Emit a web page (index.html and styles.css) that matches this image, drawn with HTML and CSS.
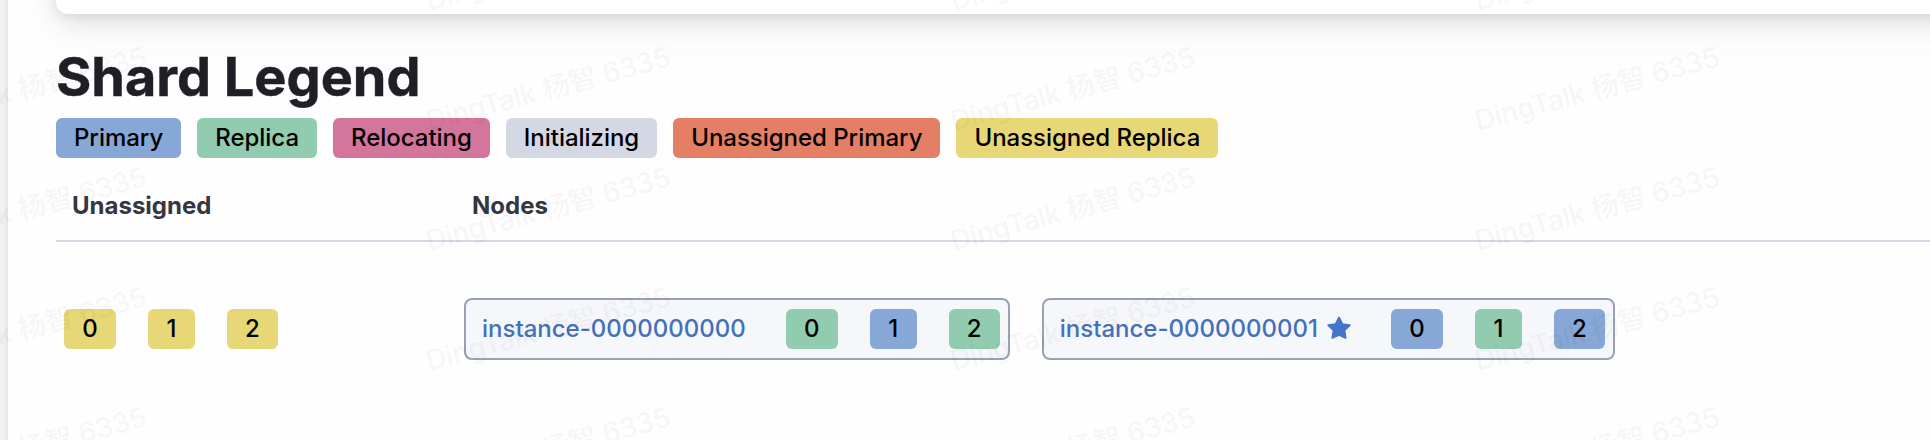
FILE: index.html
```html
<!DOCTYPE html>
<html lang="en">
<head>
<meta charset="utf-8">
<title>Shard Legend</title>
<link rel="stylesheet" href="styles.css">
</head>
<body>
<div class="app">
  <aside class="rail"></aside>
  <main class="page">
    <section class="panel"></section>
    <h2 class="title">Shard Legend</h2>
    <div class="legend">
      <span class="badge primary">Primary</span>
      <span class="badge replica">Replica</span>
      <span class="badge relocating">Relocating</span>
      <span class="badge initializing">Initializing</span>
      <span class="badge danger">Unassigned Primary</span>
      <span class="badge warning">Unassigned Replica</span>
    </div>
    <div class="table">
      <div class="row head">
        <div class="cell">Unassigned</div>
        <div class="cell">Nodes</div>
      </div>
      <div class="row body">
        <div class="shards unassigned">
          <span class="badge warning">0</span>
          <span class="badge warning">1</span>
          <span class="badge warning">2</span>
        </div>
        <div class="nodes">
          <div class="node">
            <a class="name">instance-0000000000</a>
            <div class="shards">
              <span class="badge replica">0</span>
              <span class="badge primary">1</span>
              <span class="badge replica">2</span>
            </div>
          </div>
          <div class="node">
            <a class="name">instance-0000000001</a>
            <svg class="star" viewBox="0 0 24 24"><path d="M12 1.6 15.3 8.2 22.6 9.2 17.3 14.4 18.6 21.8 12 18.9 5.4 21.8 6.7 14.4 1.4 9.2 8.7 8.2Z"/></svg>
            <div class="shards">
              <span class="badge primary">0</span>
              <span class="badge replica">1</span>
              <span class="badge primary">2</span>
            </div>
          </div>
        </div>
      </div>
    </div>
  </main>
  <svg class="watermark" width="1930" height="440">
    <defs>
      <g id="column">
        <text textLength="252" transform="translate(4 11) rotate(-15)">DingTalk 杨智 6335</text>
        <text textLength="252" transform="translate(4 131) rotate(-15)">DingTalk 杨智 6335</text>
        <text textLength="252" transform="translate(4 251) rotate(-15)">DingTalk 杨智 6335</text>
        <text textLength="252" transform="translate(4 371) rotate(-15)">DingTalk 杨智 6335</text>
        <text textLength="252" transform="translate(4 491) rotate(-15)">DingTalk 杨智 6335</text>
      </g>
    </defs>
    <use href="#column" x="-99"/>
    <use href="#column" x="425"/>
    <use href="#column" x="949.5"/>
    <use href="#column" x="1474"/>
  </svg>
</div>
</body>
</html>
```
FILE: styles.css
```css
* { box-sizing: border-box; }

body {
  margin: 0;
  background: #fefefe;
  font-family: Inter, "Noto Sans CJK SC", sans-serif;
  font-size: 24px;
  color: #343741;
}

.app {
  position: relative;
  display: flex;
  height: 440px;
  overflow: hidden;
}

.rail {
  width: 8px;
  background: linear-gradient(90deg, #f2f3f5 0, #eff0f2 50%, #e5e6e8 100%);
}

.page {
  flex: 1;
  min-width: 0;
  padding-left: 48px;
}

.panel {
  height: 214px;
  margin: -200px -80px 0 0;
  background: #fff;
  border-radius: 12px;
  box-shadow: 0 2px 12px rgba(0, 0, 0, .07), 0 8px 24px rgba(0, 0, 0, .09), 0 16px 44px rgba(0, 0, 0, .045);
}

.title {
  margin: 39px 0 0;
  height: 65px;
  font-size: 54px;
  line-height: 48px;
  font-weight: 700;
  letter-spacing: 0;
  color: #1f2025;
  white-space: nowrap;
  -webkit-text-stroke: .5px #1f2025;
}

.legend {
  display: flex;
  gap: 16px;
}

.badge {
  height: 40px;
  padding: 0 18px;
  border-radius: 6px;
  line-height: 39px;
  font-weight: 500;
  color: #000;
  white-space: nowrap;
}

.legend .badge { letter-spacing: -.03px; }

.primary { background: #87a7d6; }
.replica { background: #91cbb0; }
.relocating { background: #d4769b; }
.initializing { background: #d4d8e5; }
.danger { background: #e47e65; }
.warning { background: #e8d776; }

.row {
  display: grid;
  grid-template-columns: 400px 1fr;
}

.head {
  height: 84px;
  padding-top: 30px;
  border-bottom: 2px solid #d3d9e5;
  font-weight: 700;
  line-height: 36px;
}

.cell { padding-left: 16px; }

.body {
  padding: 56px 0 0 8px;
}

.shards {
  display: grid;
  grid-template-columns: 52px 47px 51px;
  column-gap: 32px;
}

.shards .badge {
  padding: 0;
  text-align: center;
}

.unassigned { padding-top: 11px; }

.nodes {
  display: flex;
  gap: 32px;
}

.node {
  display: flex;
  align-items: center;
  height: 62px;
  padding: 0 8px 0 16px;
  border: 2px solid #98a2b3;
  border-radius: 8px;
  background: #f5f7fb;
}

.node .shards { margin-left: 40px; }

.name {
  color: #4470b9;
  font-weight: 500;
  line-height: 38px;
  white-space: nowrap;
}

.star {
  width: 24px;
  height: 24px;
  margin: -2px 0 0 9px;
  fill: #4475ca;
  stroke: #4475ca;
  stroke-width: 2;
  stroke-linejoin: round;
}

.watermark {
  position: absolute;
  inset: 0;
  pointer-events: none;
  font-size: 28px;
  font-weight: 500;
  fill: rgba(0, 0, 0, .05);
}
```
